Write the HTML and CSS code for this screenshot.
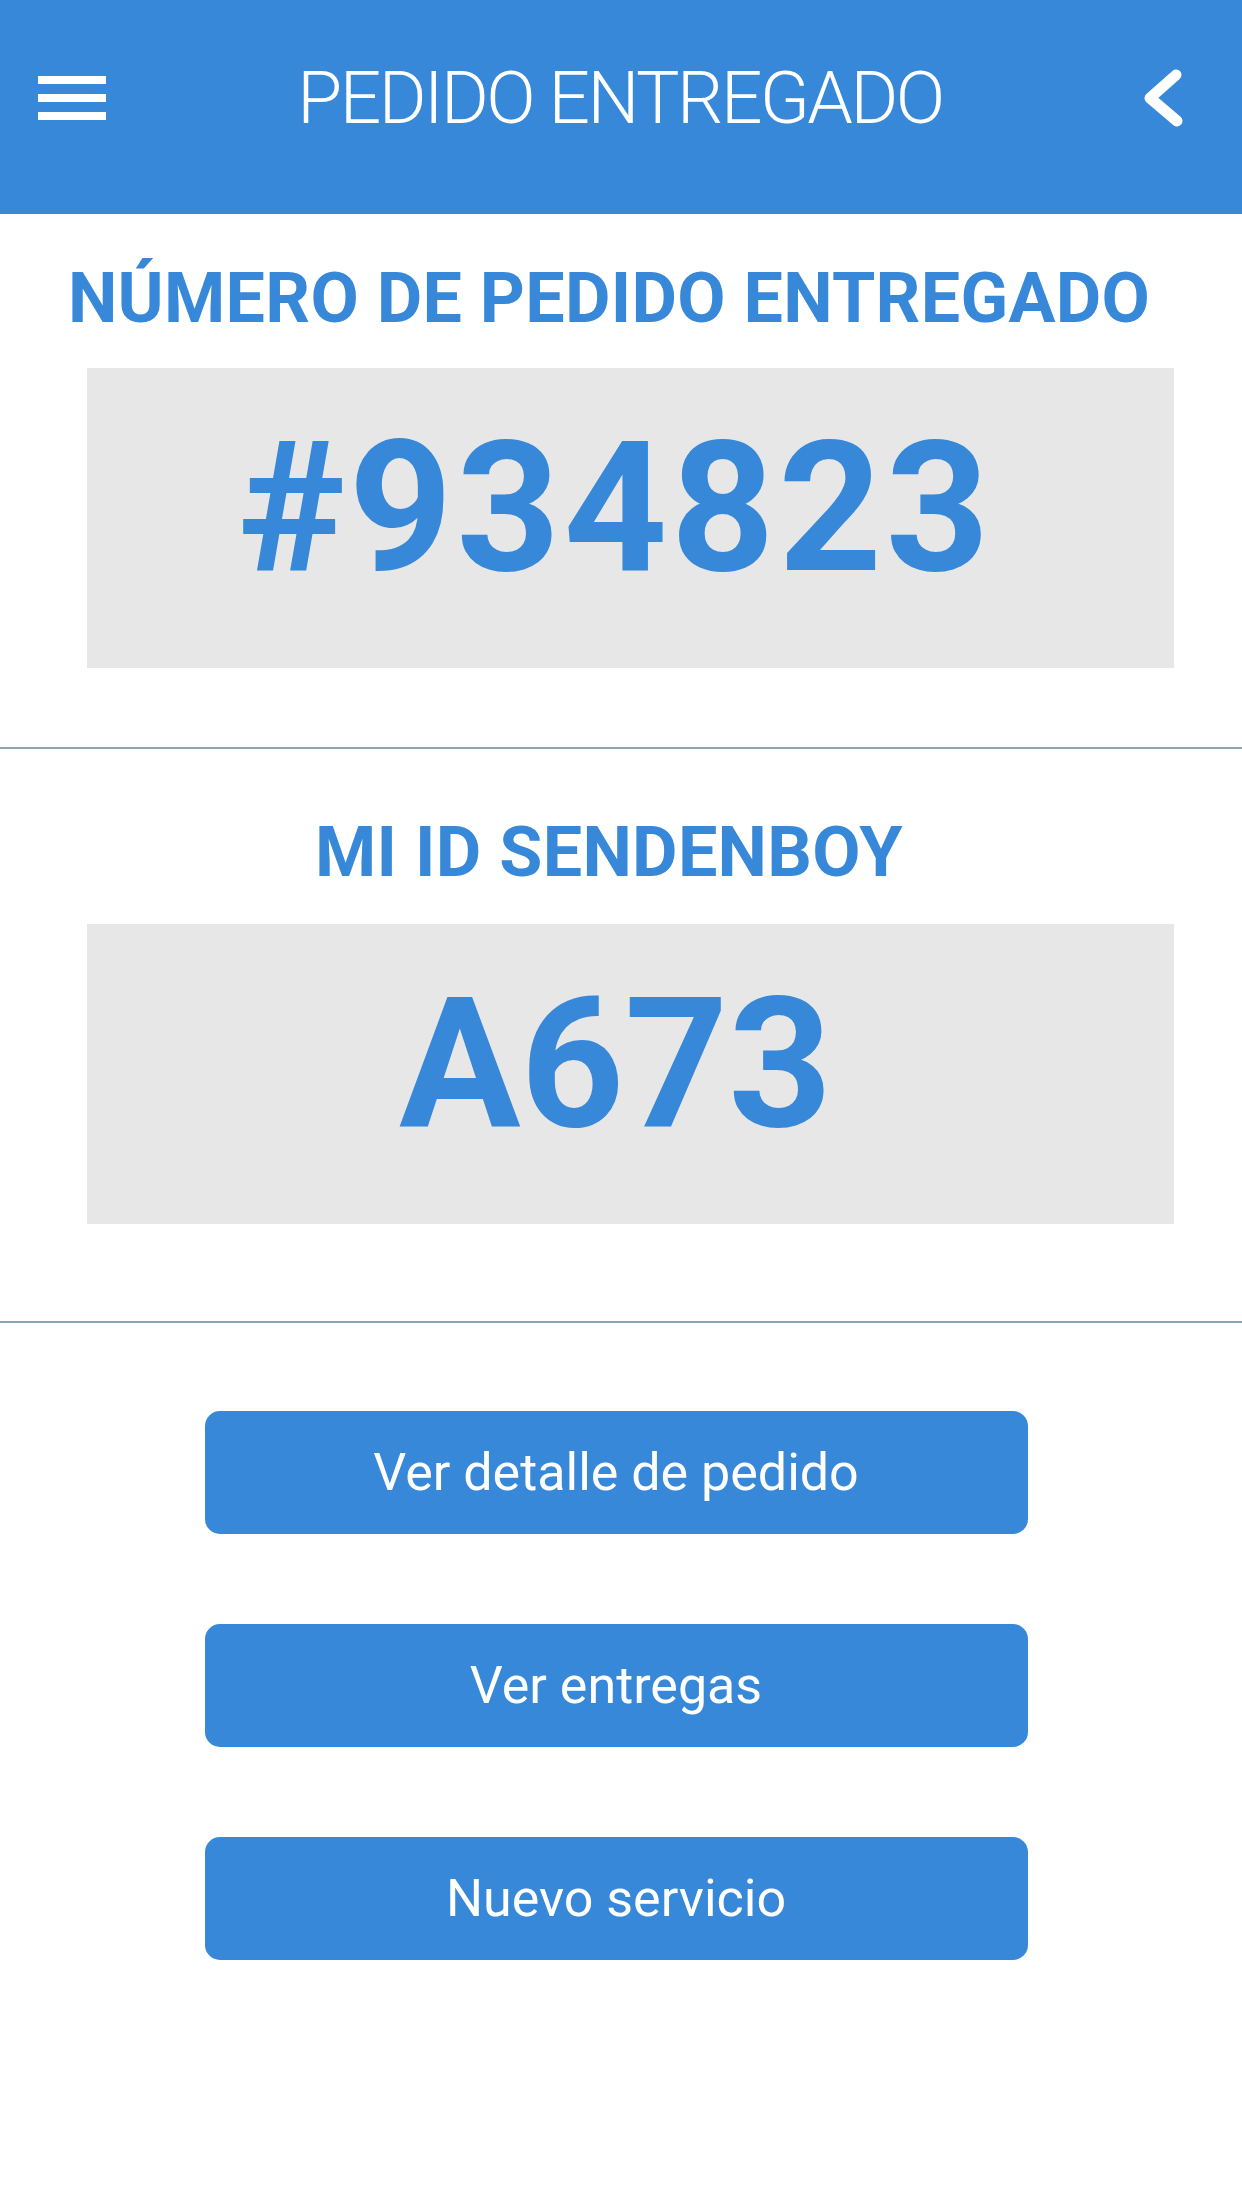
FILE: index.html
```html
<!DOCTYPE html>
<html lang="es">
<head>
  <meta charset="UTF-8">
  <meta name="viewport" content="width=device-width, initial-scale=1.0">
  <title>Pedido entregado</title>
  <link rel="stylesheet" href="styles.css">
</head>
<body>
  <header class="topbar">
    <div class="menu-btn">
      <span></span>
      <span></span>
      <span></span>
    </div>
    <h1 class="topbar-title">PEDIDO ENTREGADO</h1>
    <svg class="back-btn" width="44" height="60" viewBox="0 0 44 60">
      <polyline points="34,7 8,30 35,53" fill="none" stroke="#fff" stroke-width="11" stroke-linecap="round" stroke-linejoin="round"/>
    </svg>
  </header>

  <section class="block block-order">
    <h2 class="block-title">NÚMERO DE PEDIDO ENTREGADO</h2>
    <div class="code-box"><span class="code code-wide">#934823</span></div>
  </section>

  <section class="block block-id">
    <h2 class="block-title">MI ID SENDENBOY</h2>
    <div class="code-box"><span class="code">A673</span></div>
  </section>

  <div class="actions">
    <button class="action-btn">Ver detalle de pedido</button>
    <button class="action-btn">Ver entregas</button>
    <button class="action-btn">Nuevo servicio</button>
  </div>
</body>
</html>
```

FILE: styles.css
```css
body { margin: 0; background: #fff; font-family: Roboto, "Liberation Sans", sans-serif; color: #3788d8; }

.topbar { height: 214px; box-sizing: border-box; padding: 0 56px 18px 38px; background: #3788d8; display: grid; grid-template-columns: 1fr auto 1fr; align-items: center; }
.menu-btn { justify-self: start; display: flex; flex-direction: column; gap: 10px; }
.menu-btn span { display: block; width: 68px; height: 8px; background: #fff; }
.topbar-title { margin: 0; padding-left: 16px; font-size: 73px; font-weight: 300; line-height: 1; letter-spacing: -2.5px; color: #fff; }
.back-btn { justify-self: end; display: block; }

.block { text-align: center; border-bottom: 2px solid #8fa3b0; }
.block-order { padding: 49px 0 79px; }
.block-id { padding: 68px 0 97px; }
.block-title { margin: 0 0 35px; padding-right: 24px; font-size: 70px; font-weight: 700; line-height: 1; letter-spacing: 0.3px; }
.block-id .block-title { margin-bottom: 37px; }

.code-box { height: 300px; box-sizing: border-box; margin: 0 68px 0 87px; padding: 0 30px 20px 0; background: #e7e7e7; display: flex; align-items: center; justify-content: center; }
.code { font-size: 181px; font-weight: 700; line-height: 1; }
.code-wide { letter-spacing: 3.5px; }

.actions { display: flex; flex-direction: column; align-items: center; gap: 90px; padding: 88px 0 0; margin-left: -10px; }
.action-btn { width: 823px; height: 123px; border: none; border-radius: 15px; background: #3788d8; color: #fff; font-family: inherit; font-size: 52px; font-weight: 400; cursor: pointer; }
```
